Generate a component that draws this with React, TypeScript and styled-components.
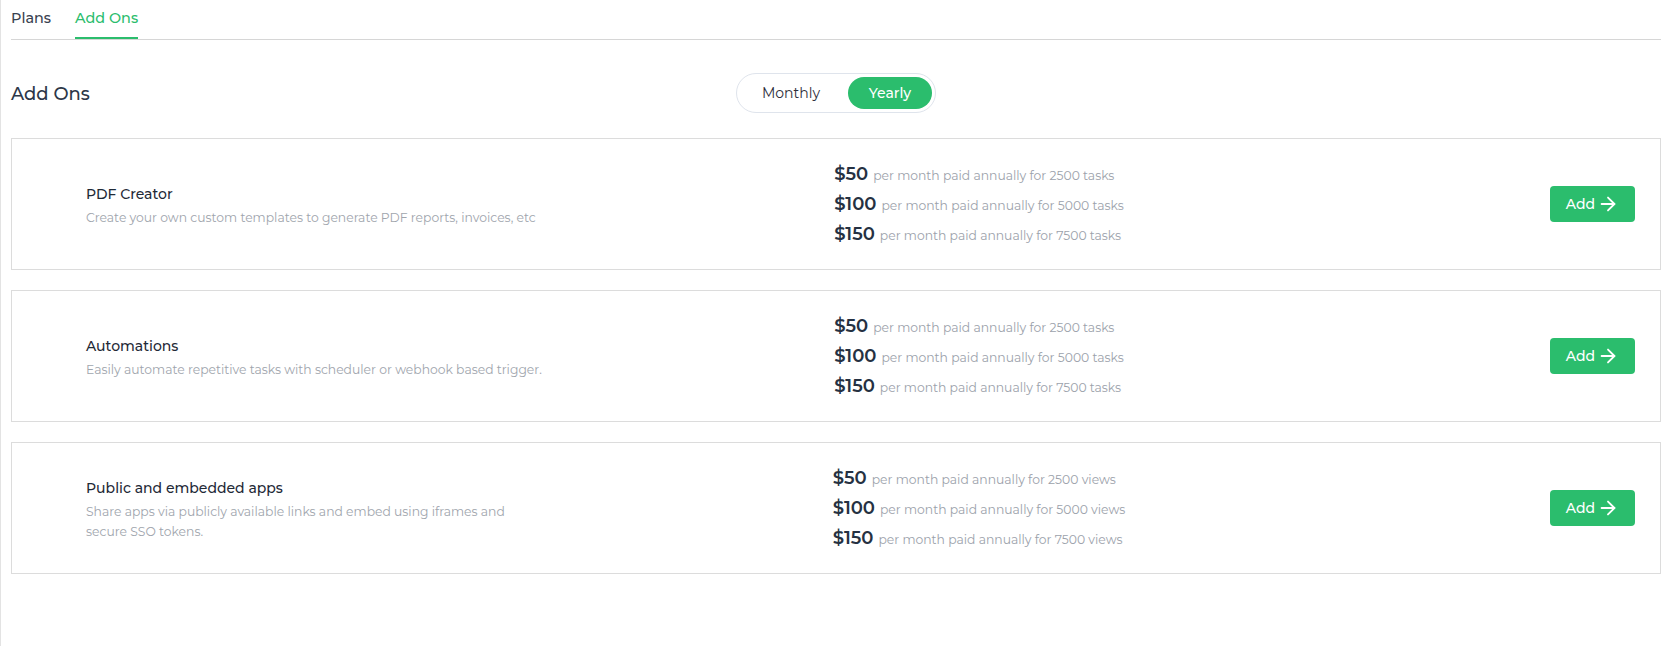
import React, { useState } from 'react';
import styled, { createGlobalStyle } from 'styled-components';
import { ArrowRight } from 'lucide-react';

const GlobalStyle = createGlobalStyle`
    html, body {
        margin: 0;
        padding: 0;
        background: #ffffff;
    }
    body {
        font-family: "Montserrat", Inter, "Noto Sans", sans-serif;
        color: #2d3748;
    }
    * {
        box-sizing: border-box;
    }
`

type Tier = {
    price: string;
    text: string;
}

type AddOn = {
    title: string;
    description: string;
    tiers: Tier[];
}

const makeTiers = (unit: string): Tier[] => [
    { price: '$50', text: `per month paid annually for 2500 ${unit}` },
    { price: '$100', text: `per month paid annually for 5000 ${unit}` },
    { price: '$150', text: `per month paid annually for 7500 ${unit}` },
]

const addOns: AddOn[] = [
    {
        title: 'PDF Creator',
        description: 'Create your own custom templates to generate PDF reports, invoices, etc',
        tiers: makeTiers('tasks'),
    },
    {
        title: 'Automations',
        description: 'Easily automate repetitive tasks with scheduler or webhook based trigger.',
        tiers: makeTiers('tasks'),
    },
    {
        title: 'Public and embedded apps',
        description: 'Share apps via publicly available links and embed using iframes and secure SSO tokens.',
        tiers: makeTiers('views'),
    },
]

const App = () => {
    const [tab, setTab] = useState('addons');
    const [period, setPeriod] = useState('yearly');

    return (
        <>
            <GlobalStyle />
            <Page>
                <Tabs>
                    <Tab active={tab === 'plans'} onClick={() => setTab('plans')}>Plans</Tab>
                    <Tab active={tab === 'addons'} onClick={() => setTab('addons')}>Add Ons</Tab>
                </Tabs>

                <HeaderRow>
                    <Heading>Add Ons</Heading>
                    <Toggle>
                        <ToggleButton width={102} active={period === 'monthly'} onClick={() => setPeriod('monthly')}>
                            Monthly
                        </ToggleButton>
                        <ToggleButton width={84} active={period === 'yearly'} onClick={() => setPeriod('yearly')}>
                            Yearly
                        </ToggleButton>
                    </Toggle>
                    <span />
                </HeaderRow>

                <CardList>
                    {addOns.map((item) => (
                        <Card key={item.title}>
                            <Info>
                                <Title>{item.title}</Title>
                                <Description>{item.description}</Description>
                            </Info>
                            <PriceColumn>
                                <PriceList>
                                    {item.tiers.map((tier) => (
                                        <PriceLine key={tier.price}>
                                            <Price>{tier.price}</Price>
                                            <PriceNote>{tier.text}</PriceNote>
                                        </PriceLine>
                                    ))}
                                </PriceList>
                            </PriceColumn>
                            <ButtonColumn>
                                <AddButton>
                                    Add
                                    <ArrowRight size={22} strokeWidth={2} />
                                </AddButton>
                            </ButtonColumn>
                        </Card>
                    ))}
                </CardList>
            </Page>
        </>
    )
}

const Page = styled.div`
    min-height: 646px;
    border-left: 1px solid #e3e3e3;
    padding: 0 5px 0 10px;
`

const Tabs = styled.div`
    display: flex;
    gap: 24px;
    border-bottom: 1px solid #d6d6d6;
`

const Tab = styled.div<{ active?: boolean }>`
    height: 39px;
    padding-top: 8px;
    font-size: 14.4px;
    line-height: 20px;
    font-weight: 500;
    cursor: pointer;
    color: ${(p) => (p.active ? '#2bbd6d' : '#3a4250')};
    border-bottom: 2px solid ${(p) => (p.active ? '#2bbd6d' : 'transparent')};
`

const HeaderRow = styled.div`
    display: grid;
    grid-template-columns: 1fr auto 1fr;
    align-items: center;
    margin-top: 33px;
`

const Heading = styled.h2`
    margin: 2px 0 0;
    font-size: 18px;
    font-weight: 500;
    color: #2d3748;
`

const Toggle = styled.div`
    display: flex;
    gap: 6px;
    padding: 3px;
    height: 40px;
    border: 1px solid #dfe4ec;
    border-radius: 20px;
`

const ToggleButton = styled.button<{ width: number; active?: boolean }>`
    width: ${(p) => p.width}px;
    height: 32px;
    border: none;
    border-radius: 16px;
    font-family: inherit;
    font-size: 14px;
    font-weight: ${(p) => (p.active ? 500 : 400)};
    cursor: pointer;
    color: ${(p) => (p.active ? '#ffffff' : '#2e2e3a')};
    background: ${(p) => (p.active ? '#2bbd6d' : 'transparent')};
`

const CardList = styled.div`
    display: flex;
    flex-direction: column;
    gap: 20px;
    margin-top: 25px;
`

const Card = styled.div`
    display: grid;
    grid-template-columns: 700px 386px 1fr;
    align-items: center;
    padding: 20px 25px 20px 74px;
    border: 1px solid #dcdcdc;
`

const Info = styled.div`
    display: flex;
    flex-direction: column;
    gap: 4px;
    padding-top: 3px;
`

const Title = styled.div`
    font-size: 14px;
    line-height: 20px;
    font-weight: 500;
    color: #1f2a37;
`

const Description = styled.div`
    max-width: 460px;
    font-size: 12.35px;
    line-height: 20px;
    color: #a0a5ad;
`

const PriceColumn = styled.div`
    display: flex;
    justify-content: center;
`

const PriceList = styled.div`
    display: flex;
    flex-direction: column;
`

const PriceLine = styled.div`
    display: flex;
    align-items: baseline;
    height: 30px;
    line-height: 30px;
`

const Price = styled.span`
    font-size: 18px;
    font-weight: 600;
    color: #253142;
`

const PriceNote = styled.span`
    margin-left: 5px;
    font-size: 12.35px;
    color: #9ca2ab;
`

const ButtonColumn = styled.div`
    display: flex;
    justify-content: flex-end;
`

const AddButton = styled.button`
    display: flex;
    align-items: center;
    justify-content: center;
    gap: 2px;
    width: 85px;
    height: 36px;
    border: none;
    border-radius: 4px;
    background: #2bbd6d;
    color: #ffffff;
    font-family: inherit;
    font-size: 14px;
    font-weight: 500;
    cursor: pointer;
`

export default App;
